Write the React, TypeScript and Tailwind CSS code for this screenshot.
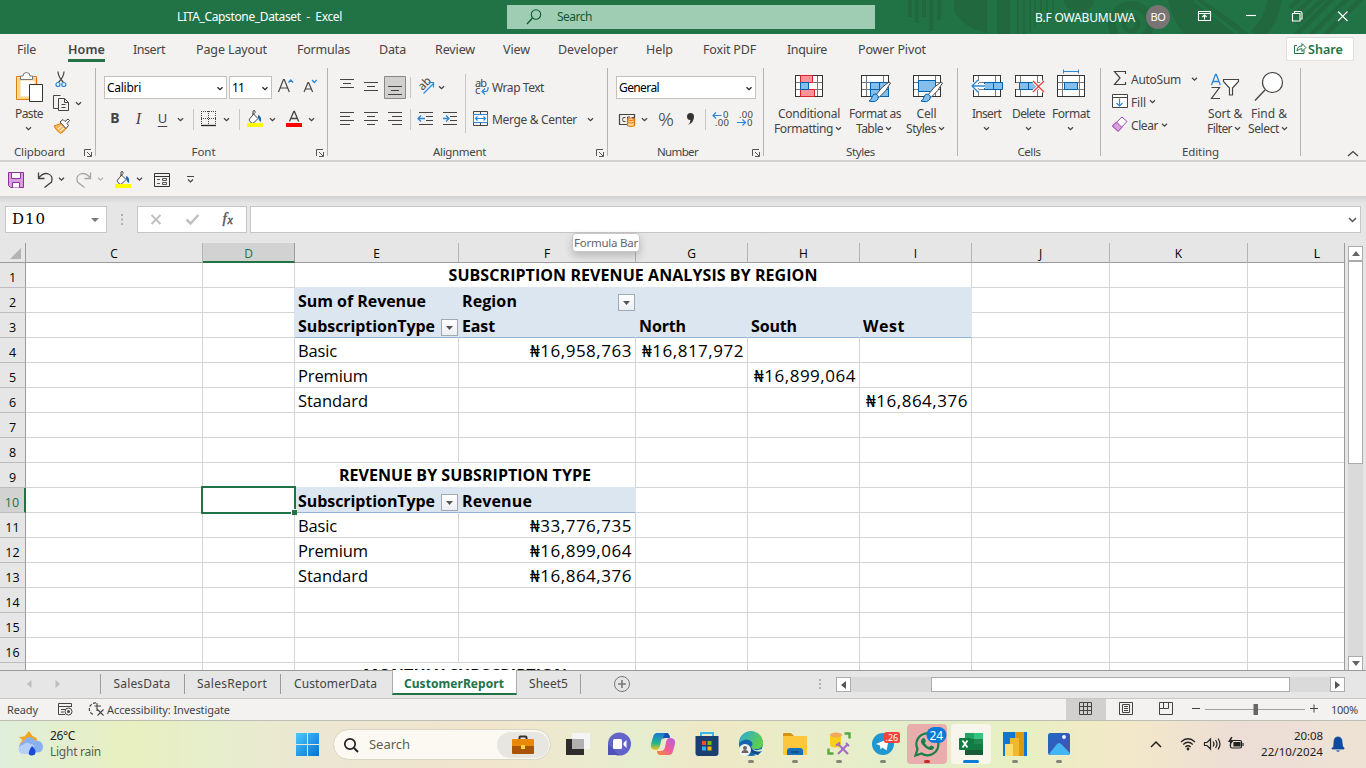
import { useLayoutEffect, useRef } from "react";
import type { ReactNode } from "react";

/* Single line of text whose tracking is fitted to a fixed advance width. */
function T({ w, className = "", children }: { w: number; className?: string; children: string }) {
  const ref = useRef<HTMLSpanElement>(null);
  useLayoutEffect(() => {
    const el = ref.current;
    if (!el) return;
    el.style.width = "auto";
    el.style.letterSpacing = "0px";
    const natural = el.getBoundingClientRect().width;
    el.style.letterSpacing = `${(w - natural) / children.length}px`;
    el.style.width = `${w}px`;
  }, [w, children]);
  return (
    <span ref={ref} className={`inline-block shrink-0 whitespace-nowrap ${className}`}>
      {children}
    </span>
  );
}

/* Drawing whose view box uses window coordinates. */
function V({ b, className = "", children }: { b: [number, number, number, number]; className?: string; children?: ReactNode }) {
  return (
    <svg width={b[2]} height={b[3]} viewBox={b.join(" ")} fill="none" className={`block shrink-0 ${className}`}>
      {children}
    </svg>
  );
}

function Ch({ x, y, c = "#444" }: { x: number; y: number; c?: string }) {
  return <path d={`M${x - 2.5} ${y - 1.2}l2.5 2.4l2.5 -2.4`} stroke={c} strokeWidth="1.3" />;
}

function Lines({ rows }: { rows: [number, number, number][] }) {
  return (
    <g stroke="#444" strokeWidth="1">
      {rows.map(([x1, x2, y]) => (
        <path key={y} d={`M${x1} ${y + 0.5}H${x2}`} />
      ))}
    </g>
  );
}

function VSep({ x, y1, y2 }: { x: number; y1: number; y2: number }) {
  return <path d={`M${x + 0.5} ${y1}V${y2}`} stroke="#c8c6c4" />;
}

/* ---------- Title bar ---------- */

function TitleBar() {
  return (
    <header className="relative flex h-[34px] items-center overflow-hidden bg-[#217346] text-[12px] text-white">
      <svg className="absolute left-0 top-0" width="1366" height="34" viewBox="0 0 1366 34" fill="none">
        <g fill="#22683f">
          <path d="M908 0h4v17h-4zM915 0h4v23h-4zM922 0h4v17h-4zM929 0h4v31h-4zM937 0h4v20h-4zM954 0h33v33q-22-4-33-22zM997 0h13v34h-13zM1017 0h2v34h-2zM1023 0h2v34h-2zM1029 0h2v31h-2zM1034 0h2v27h-2zM1040 0h2v24h-2zM1046 0h2v19h-2zM1052 0h2v14h-2z" />
          <path d="M1064 0a14 11 0 0 0 30 0z" />
          <path d="M1168 0h34l52 34h-70q-12-14-16-34z" />
        </g>
        <g stroke="#22683f">
          <circle cx="1131" cy="24" r="19" strokeWidth="8" />
          <circle cx="1131" cy="24" r="7" strokeWidth="5" />
          <path d="M1194 0l44 34M1208 0l44 34" stroke="#217346" strokeWidth="3" />
          <path d="M1275 -2q-3 22-19 38" strokeWidth="14" />
          <path d="M1290 8l9-9M1294 16l18-18M1297 24l27-26M1296 35l38-38M1308 38l40-40M1322 38l40-40" strokeWidth="5" />
        </g>
      </svg>
      <div className="relative ml-[177px] flex h-full w-[330px] items-center pb-[1px]">
        <T w={165} className="whitespace-pre">{"LITA_Capstone_Dataset  -  Excel"}</T>
      </div>
      <div className="relative mb-px flex h-6 w-[368px] items-center bg-[#9fcdb3] text-[#0e5a2f]">
        <V b={[507, 5, 50, 24]}>
          <circle cx="536" cy="14.5" r="4.7" stroke="#0e5a2f" strokeWidth="1.1" />
          <path d="M532.5 18L527 24" stroke="#0e5a2f" strokeWidth="1.3" />
        </V>
        <T w={35}>Search</T>
      </div>
      <div className="relative ml-[160px] flex h-full items-center">
        <T w={100} className="pt-px">B.F OWABUMUWA</T>
        <div className="ml-[11px] flex size-6 items-center justify-center rounded-full bg-[#7a7574] text-[11px]">
          <T w={15}>BO</T>
        </div>
      </div>
      <V b={[1170, 0, 196, 34]} className="relative">
        <g stroke="#fff" strokeWidth="1.1">
          <path d="M1198.5 11.5h12v9h-12zM1198.5 13.5h12M1204.500 19.500v-4.500M1202.300 17l2.200-2.200l2.200 2.200" />
          <path d="M1246 15.500h10" />
          <path d="M1292.500 13.500h7.500v7.500h-7.500zM1294.500 13.500v-2h5.500q2 0 2 2v5.500h-2" />
          <path d="M1338 11.500l9.500 9.500M1347.500 11.500l-9.500 9.500" />
        </g>
      </V>
    </header>
  );
}

/* ---------- Ribbon tabs ---------- */

const TABS: { name: string; w: number; slot: string; active?: boolean }[] = [
  { name: "File", w: 19, slot: "w-[51px]" },
  { name: "Home", w: 37, slot: "w-[65px]", active: true },
  { name: "Insert", w: 32, slot: "w-[63px]" },
  { name: "Page Layout", w: 71, slot: "w-[101px]" },
  { name: "Formulas", w: 53, slot: "w-[82px]" },
  { name: "Data", w: 27, slot: "w-[56px]" },
  { name: "Review", w: 40, slot: "w-[68px]" },
  { name: "View", w: 27, slot: "w-[55px]" },
  { name: "Developer", w: 60, slot: "w-[88px]" },
  { name: "Help", w: 27, slot: "w-[57px]" },
  { name: "Foxit PDF", w: 53, slot: "w-[84px]" },
  { name: "Inquire", w: 40, slot: "w-[71px]" },
  { name: "Power Pivot", w: 68, slot: "w-[428px]" },
];

function Tabs() {
  return (
    <nav className="flex h-8 items-start pl-[17px] text-[12.500px] leading-[32px] text-[#444]">
      {TABS.map((t) => (
        <div key={t.name} className={`h-8 shrink-0 ${t.slot}`}>
          <div className={`flex h-[28px] w-fit ${t.active ? "border-b-[3px] border-[#217346] font-semibold" : ""}`}>
            <T w={t.w}>{t.name}</T>
          </div>
        </div>
      ))}
      <button className="mt-[3px] flex h-6 w-[68px] shrink-0 items-center rounded-[2px] border border-[#e1dfdd] bg-white text-[12.500px] font-semibold leading-6 text-[#217346]">
        <V b={[1287, 38, 21, 22]}>
          <path d="M1297 45.500h-2.500v8h9.500v-3.500M1297 51q0-5 5-5v-2.500l4 4l-4 4v-2.800q-3 0-5 2.300z" stroke="#217346" />
        </V>
        <T w={35} className="pt-px">Share</T>
      </button>
    </nav>
  );
}

/* ---------- Ribbon ---------- */

function Group({ width, label, labelW, launcher, children }: { width: string; label: string; labelW: number; launcher?: boolean; children: ReactNode }) {
  return (
    <>
      <section className={`flex h-full shrink-0 flex-col ${width}`}>
        <div className="flex h-[79px]">{children}</div>
        <div className="flex h-[15px] items-center leading-[14px]">
          <div className="-mt-[2px] flex grow justify-center text-[11.500px]">
            <T w={labelW}>{label}</T>
          </div>
          {launcher && (
            <V b={[0, 0, 16, 14]}>
              <path d="M5.500 10V3.500H12M8 6l4 4M12.500 6v4.500H8" stroke="#555" />
            </V>
          )}
        </div>
      </section>
      <div className="mt-[2px] h-[88px] w-px shrink-0 bg-[#b5b3b1]" />
    </>
  );
}

function Big({ width, icon, l1, w1, l2, w2 }: { width: string; icon: ReactNode; l1: string; w1: number; l2?: string; w2?: number }) {
  return (
    <div className={`flex shrink-0 flex-col items-center text-[12px] leading-4 ${width}`}>
      {icon}
      <T w={w1} className="relative top-[0.500px]">{l1}</T>
      <div className="flex h-4 items-center">
        {l2 && <T w={w2 ?? 0}>{l2}</T>}
        <svg width="12" height="16" viewBox="0 0 12 16" fill="none" className={l2 ? "-mr-[1px] shrink-0" : "shrink-0"}>
          <Ch x={5.500} y={7.500} />
        </svg>
      </div>
    </div>
  );
}

function Select({ width, children, w }: { width: string; children: string; w: number }) {
  return (
    <div className={`flex h-[23px] shrink-0 items-center justify-between border border-[#c3c1bf] bg-white pl-[2px] text-[12px] leading-[21px] text-black ${width}`}>
      <T w={w}>{children}</T>
      <svg width="12" height="12" viewBox="0 0 12 12" fill="none" className="shrink-0">
        <Ch x={6} y={6.500} c="#222" />
      </svg>
    </div>
  );
}

function TableGlyph({ x, y, w = 27, h = 21 }: { x: number; y: number; w?: number; h?: number }) {
  return (
    <g>
      <rect x={x + 0.5} y={y + 0.5} width={w} height={h} fill="#fff" stroke="#333" />
      <path d={`M${x + 5.500} ${y + 1}v${h - 1}M${x + 22.500} ${y + 1}v${h - 1}M${x + 1} ${y + 7.500}h${w - 1}M${x + 1} ${y + 14.500}h${w - 1}`} stroke="#777" />
    </g>
  );
}

function Brush({ x, y }: { x: number; y: number }) {
  return (
    <g>
      <path d={`M${x + 20} ${y - 1}l1.500 1q-4 8-11.500 14.500l-3-2.500q6-9 13-13z`} fill="#fff" stroke="#444" />
      <path d={`M${x} ${y + 18}q2.500-1 3-4q1-3.500 4-3q3.500 1.500 2 5q-2.500 4-9 2z`} fill="#83beec" stroke="#0063b1" />
    </g>
  );
}

function Bucket({ x, y }: { x: number; y: number }) {
  return (
    <g>
      <path d={`M${x + 6} ${y + 2.500}l5 5l-4.500 4.500q-1 .6-2 0l-2-2.200q-.6-1 0-1.800l5.500-6.500v-1.500q-1-1-2 0v4`} fill="#fff" stroke="#444" />
      <path d={`M${x + 11} ${y + 4}q4 1 3 7q-2-1-3-4z`} fill="#1d70b7" />
      <path d={`M${x} ${y + 14}h16`} stroke="#ffff00" strokeWidth="4" />
    </g>
  );
}

function Clipboard() {
  return (
    <Group width="w-[95px]" label="Clipboard" labelW={51} launcher>
      <div className="pl-[9px]">
        <Big
          width="w-[40px]"
          l1="Paste"
          w1={28}
          icon={
            <V b={[14, 66, 34, 39]}>
              <path d="M21 79h17v19h-17z" fill="#fff" stroke="#f9d48a" strokeWidth="3" />
              <path d="M18.500 76.500h20v23h-20z" stroke="#e07a0a" transform="translate(0 0)" />
              <path d="M22.500 79.500v-3.500h2.500q0-3.500 3.500-3.500t3.500 3.500h2.500v3.500z" fill="#fff" stroke="#777" />
              <path d="M31.500 84.500h13v17h-13z" fill="#fff" stroke="#333" />
            </V>
          }
        />
      </div>
      <V b={[49, 66, 46, 79]}>
        <path d="M58 71.500q0 5 5.500 11M64 71.500q0 5-5.500 11" stroke="#444" strokeWidth="1.200" />
        <circle cx="58" cy="84.500" r="2" stroke="#2b88d8" strokeWidth="1.200" />
        <circle cx="63.800" cy="84.500" r="2" stroke="#2b88d8" strokeWidth="1.200" />
        <path d="M58.500 108.500h-5v-13h7M58.500 98.500h6l4 4v8h-10zM64.500 98.500v4h4M61.500 104.500h4M61.500 107.500h4" stroke="#444" />
        <Ch x={78.500} y={103.500} />
        <path d="M54 126l8.500-3l4 4.500q-2 4-6 6q-4-2.500-6.500-7.500z" fill="#f9b85c" stroke="#e07a0a" />
        <path d="M60 122l3-2.500l2 2l3-2.500l1.500 1.500l-2.500 3l1.500 2l-2.500 3z" fill="#fff" stroke="#444" />
        <path d="M58 129l4-3M60 131l4-3" stroke="#fff" />
      </V>
    </Group>
  );
}

function FontGroup() {
  return (
    <Group width="w-[231px]" label="Font" labelW={24} launcher>
      <div className="flex flex-col pl-2 pt-[10px]">
        <div className="flex h-[23px]">
          <Select width="w-[123px]" w={34}>Calibri</Select>
          <div className="w-[2px]" />
          <Select width="w-[43px]" w={12}>11</Select>
          <V b={[272, 76, 54, 23]}>
            <path d="M278.500 92l5-12.500h.8l5 12.500M280.300 88h7" stroke="#444" strokeWidth="1.200" />
            <path d="M288.500 82.500l2.300-2.500l2.300 2.500" stroke="#2b88d8" strokeWidth="1.300" />
            <path d="M304 92l4-9.500h.6l4 9.500M305.300 89h5.500" stroke="#444" strokeWidth="1.200" />
            <path d="M312 80l2.300 2.500l2.300-2.500" stroke="#2b88d8" strokeWidth="1.300" />
          </V>
        </div>
        <div className="mt-[8px] flex h-[24px] items-center text-[14px] leading-6">
          <span className="-mt-[2px] w-[22px] text-center font-bold">B</span>
          <span className="w-[25px] text-center font-['Liberation_Serif'] text-[16px] italic">I</span>
          <span className="-mt-[2px] w-[23px] text-center text-[13px] underline underline-offset-[3px]">U</span>
          <V b={[174, 107, 150, 24]}>
            <Ch x={180.500} y={119.500} />
            <VSep x={193} y1={109} y2={130} />
            <path d="M201.500 111v13M208.500 111v13M215.500 111v13M201 111.500h15M201 118.500h15" stroke="#444" strokeDasharray="1 1" />
            <path d="M201 125.500h15" stroke="#222" strokeWidth="1.300" />
            <Ch x={226.500} y={119.500} />
            <VSep x={239} y1={109} y2={130} />
            <Bucket x={247} y={111} />
            <Ch x={272.500} y={119.500} />
            <path d="M289.500 121.500l4.300-10h.6l4.300 10M291 118.500h6" stroke="#444" strokeWidth="1.300" />
            <path d="M286 125h16" stroke="#ff0000" strokeWidth="4" />
            <Ch x={311.500} y={119.500} />
          </V>
        </div>
      </div>
    </Group>
  );
}

function Alignment() {
  return (
    <Group width="w-[279px]" label="Alignment" labelW={53} launcher>
      <V b={[328, 66, 147, 79]}>
        <Lines rows={[[340, 354, 79], [343, 351, 83], [340, 354, 87]]} />
        <Lines rows={[[364, 378, 82], [367, 375, 86], [364, 378, 90]]} />
        <path d="M384.500 76.500h21v22h-21z" fill="#d2d0ce" stroke="#8a8886" />
        <Lines rows={[[388, 402, 86], [391, 399, 90], [388, 402, 94]]} />
        <VSep x={410} y1={77} y2={98} />
        <text x="0" y="0" transform="translate(422.500 91) rotate(-45)" fill="#444" fontSize="11.500" fontFamily="Noto Sans">ab</text>
        <path d="M423.500 93.500l10-10M428.500 82.500h5v5" stroke="#2b88d8" strokeWidth="1.200" />
        <Ch x={441.500} y={87.500} />
        <VSep x={465} y1={74} y2={133} />
        <Lines rows={[[340, 354, 112], [340, 350, 116], [340, 354, 120], [340, 350, 124]]} />
        <Lines rows={[[364, 378, 112], [367, 375, 116], [364, 378, 120], [367, 375, 124]]} />
        <Lines rows={[[388, 402, 112], [392, 402, 116], [388, 402, 120], [392, 402, 124]]} />
        <VSep x={410} y1={109} y2={130} />
        <Lines rows={[[419, 433, 112], [426, 433, 116], [426, 433, 120], [419, 433, 124]]} />
        <Lines rows={[[443, 457, 112], [450, 457, 116], [450, 457, 120], [443, 457, 124]]} />
        <path d="M425 118.500h-6.500M421 115.500l-3 3l3 3M443 118.500h5.500M446 115.500l3 3l-3 3" stroke="#2b88d8" strokeWidth="1.300" />
      </V>
      <div className="pt-[10px] text-[12px] leading-[24px]">
        <div className="flex h-[23px]">
          <V b={[475, 76, 17, 23]}>
            <text x="475" y="87" fill="#444" fontSize="11" fontFamily="Noto Sans" textLength="12">ab</text>
            <text x="475" y="94" fill="#444" fontSize="11" fontFamily="Noto Sans">c</text>
            <path d="M488 87v2q0 2.500-3 2.500h-2.500M485 88.500l-3 3l3 3" stroke="#2b88d8" strokeWidth="1.200" />
          </V>
          <T w={52}>Wrap Text</T>
        </div>
        <div className="mt-[9px] flex h-[23px]">
          <V b={[472, 108, 20, 23]} className="-ml-[3px]">
            <path d="M473.500 111.500h14v14h-14zM480.500 112v3M480.500 122v3" stroke="#444" />
            <path d="M473.500 114.500h14v8h-14z" fill="#fff" stroke="#2b88d8" />
            <path d="M475.500 118.500h10M477.500 116.500l-2 2l2 2M483.500 116.500l2 2l-2 2" stroke="#2b88d8" strokeWidth="1.200" />
          </V>
          <T w={85}>Merge & Center</T>
          <V b={[577, 108, 30, 23]}>
            <Ch x={590.500} y={119.500} />
          </V>
        </div>
      </div>
    </Group>
  );
}

function NumberGroup() {
  return (
    <Group width="w-[155px]" label="Number" labelW={41} launcher>
      <div className="pl-2 pt-[10px]">
        <Select width="w-[140px]" w={40}>General</Select>
        <V b={[616, 99, 146, 40]}>
          <path d="M619.500 114.500h15v10h-15z" stroke="#444" strokeWidth="1.200" />
          <path d="M625.500 117.500q-3-1-3 2t3 2M627.500 122v-5h2.500M632 119v-1.500h2.500" stroke="#444" />
          <path d="M627.500 119v6.500q3.500 2 7 0v-6.500q-3.500-2-7 0zM627.500 122q3.500 2 7 0M627.500 119.500q3.500 2 7 0" fill="#fbd9a5" stroke="#e07a0a" strokeWidth="1.200" />
          <Ch x={644.500} y={119.500} />
          <text x="658" y="126" fill="#444" fontSize="18" fontFamily="Noto Sans" fontWeight="300" textLength="16" lengthAdjust="spacingAndGlyphs">%</text>
          <path d="M690.500 113a3.500 3.500 0 0 1 3.500 3.500q0 6-6 8.500q2.500-2.500 2.500-5a3.500 3.500 0 0 1 0-7z" fill="#333" />
          <VSep x={705} y1={109} y2={130} />
          <g fill="#444" fontSize="9.500" fontFamily="Noto Sans">
            <text x="723" y="118">0</text>
            <text x="715" y="126" textLength="14">.00</text>
            <text x="739" y="118" textLength="14">.00</text>
            <text x="747" y="126">0</text>
          </g>
          <path d="M721.500 115.500h-8M716 112.500l-3 3l3 3M737 122.500h8M742.500 119.500l3 3l-3 3" stroke="#2b88d8" strokeWidth="1.200" />
        </V>
      </div>
    </Group>
  );
}

function Styles() {
  return (
    <Group width="w-[193px]" label="Styles" labelW={29}>
      <Big
        width="w-[90px]"
        l1="Conditional"
        w1={62}
        l2="Formatting"
        w2={59}
        icon={
          <V b={[789, 66, 40, 39]}>
            <TableGlyph x={795} y={75} />
            <path d="M800.500 75.500h12v7h-12zM800.500 89.500h14v7h-14z" fill="#ff9296" stroke="#d8232a" />
            <path d="M800.500 82.500h8v7h-8z" fill="#83beec" stroke="#0063b1" />
          </V>
        }
      />
      <Big
        width="w-[42px]"
        l1="Format as"
        w1={52}
        l2="Table"
        w2={27}
        icon={
          <V b={[855, 66, 40, 39]}>
            <TableGlyph x={861} y={75} />
            <path d="M870.500 82.500h18v14h-18z" fill="#83beec" stroke="#0063b1" />
            <path d="M879.500 83v13M871 89.500h17" stroke="#0063b1" />
            <Brush x={869} y={83} />
          </V>
        }
      />
      <Big
        width="w-[61px]"
        l1="Cell"
        w1={20}
        l2="Styles"
        w2={30}
        icon={
          <V b={[907, 66, 40, 39]}>
            <TableGlyph x={913} y={75} />
            <path d="M918.500 80.500h17v11h-17z" fill="#83beec" stroke="#0063b1" />
            <Brush x={921} y={83} />
          </V>
        }
      />
    </Group>
  );
}

function Cells() {
  return (
    <Group width="w-[142px]" label="Cells" labelW={23}>
      <Big
        width="w-[57px]"
        l1="Insert"
        w1={29}
        icon={
          <V b={[967, 66, 40, 39]}>
            <TableGlyph x={973} y={75} />
            <path d="M984.500 82.500h18v7h-18z" fill="#83beec" stroke="#0063b1" />
            <path d="M993.500 83v6" stroke="#0063b1" />
            <path d="M985 86h-12.500M978 80.500l-5.500 5.500l5.500 5.500" stroke="#fff" strokeWidth="4" />
            <path d="M985 86h-13M978 80l-6 6l6 6" stroke="#2b88d8" strokeWidth="1.400" />
          </V>
        }
      />
      <Big
        width="w-[27px]"
        l1="Delete"
        w1={33}
        icon={
          <V b={[1009, 66, 40, 39]}>
            <TableGlyph x={1015} y={75} />
            <path d="M1014 83h5v6h-5zM1033 83h12v6h-12z" fill="#f3f2f1" />
            <path d="M1019.500 82.500h14l3 3.500l-3 3.500h-14z" fill="#83beec" stroke="#0063b1" />
            <path d="M1028.500 83v6" stroke="#0063b1" />
            <path d="M1033.500 81.500l10 10M1043.500 81.500l-10 10" stroke="#fff" strokeWidth="3.500" />
            <path d="M1033 81l11 11M1044 81l-11 11" stroke="#e8423f" strokeWidth="1.400" />
          </V>
        }
      />
      <Big
        width="w-[58px]"
        l1="Format"
        w1={38}
        icon={
          <V b={[1051, 66, 40, 39]}>
            <TableGlyph x={1057} y={75} />
            <path d="M1064.500 82.500h13v7h-13z" fill="#83beec" stroke="#0063b1" />
            <path d="M1063.500 69.500v4M1078.500 69.500v4M1063.500 71.500h15" stroke="#2b88d8" />
          </V>
        }
      />
    </Group>
  );
}

function Editing() {
  return (
    <Group width="w-[199px]" label="Editing" labelW={37}>
      <div className="flex w-[102px] flex-col pt-[2px] text-[12px] leading-[23px]">
        <div className="flex h-[22px]">
          <V b={[1101, 68, 30, 22]}>
            <path d="M1125.500 74v-2.500h-11l5.500 6.500l-5.500 6.500h11v-2.500" stroke="#444" strokeWidth="1.200" />
          </V>
          <T w={50}>AutoSum</T>
          <V b={[1181, 68, 22, 22]}>
            <Ch x={1194.500} y={79} />
          </V>
        </div>
        <div className="flex h-[23px] leading-[25px]">
          <V b={[1101, 90, 30, 23]}>
            <path d="M1112.500 94.500h15v13h-15z" fill="#fff" stroke="#444" />
            <path d="M1112.500 97.500h15" stroke="#444" />
            <path d="M1119.500 98.500v7.500M1116.500 103l3 3l3-3" stroke="#2b88d8" strokeWidth="1.200" />
          </V>
          <T w={15}>Fill</T>
          <V b={[1146, 90, 16, 23]}>
            <Ch x={1152.500} y={101.500} />
          </V>
        </div>
        <div className="flex h-[23px] leading-[25px]">
          <V b={[1101, 113, 30, 23]}>
            <path d="M1112.500 126l9.500-9l5 4.500l-9 9.500z" fill="#fff" stroke="#9b3fa8" />
            <path d="M1112.500 126l4-4l5.500 5.500l-4 4z" fill="#d8a0df" stroke="#9b3fa8" />
          </V>
          <T w={27}>Clear</T>
          <V b={[1158, 113, 16, 23]}>
            <Ch x={1164.500} y={125} />
          </V>
        </div>
      </div>
      <Big
        width="w-[44px]"
        l1="Sort &"
        w1={34}
        l2="Filter"
        w2={25}
        icon={
          <V b={[1205, 66, 40, 39]}>
            <path d="M1211.500 85l4-10.500h.8l4 10.500M1213 81.500h6" stroke="#2b88d8" strokeWidth="1.300" />
            <path d="M1211.500 87.500h8l-8 11h8.500" stroke="#444" strokeWidth="1.200" />
            <path d="M1223.500 79.500h15v2l-6 6.500v7h-3v-7l-6-6.500z" fill="#fff" stroke="#444" strokeWidth="1.200" />
          </V>
        }
      />
      <Big
        width="w-[44px]"
        l1="Find &"
        w1={36}
        l2="Select"
        w2={31}
        icon={
          <V b={[1249, 66, 40, 39]}>
            <circle cx="1272.500" cy="82.500" r="10" fill="#fff" stroke="#444" strokeWidth="1.200" />
            <path d="M1265 90l-10 10.500" stroke="#444" strokeWidth="1.300" />
          </V>
        }
      />
    </Group>
  );
}

function Ribbon() {
  return (
    <div className="flex h-[96px] border-b-2 border-[#d2d0ce] text-[#444]">
      <Clipboard />
      <FontGroup />
      <Alignment />
      <NumberGroup />
      <Styles />
      <Cells />
      <Editing />
      <V b={[1301, 66, 65, 94]}>
        <path d="M1348 156l5-4.500l5 4.500" stroke="#444" strokeWidth="1.300" />
      </V>
    </div>
  );
}

function QuickAccess() {
  return (
    <div className="h-[34px]">
      <V b={[0, 162, 250, 34]}>
        <path d="M8.500 172.500h15v15h-13l-2-2z" fill="#d8a0df" stroke="#8f2f9d" />
        <path d="M11.500 172.500h9v6h-9zM12.500 187.500v-5h7v5" fill="#fff" stroke="#8f2f9d" />
        <path d="M38.500 172.500v6h6M38.500 178q5-6 10-4t3 8l-7 5.500" stroke="#444" strokeWidth="1.300" />
        <Ch x={61.500} y={179} />
        <path d="M90.500 172.500v6h-6M90.500 178q-5-6-10-4t-3 8l7 5.500" stroke="#a8a6a4" strokeWidth="1.300" />
        <Ch x={100.500} y={179} c="#b5b3b1" />
        <Bucket x={115} y={172} />
        <Ch x={139.500} y={179} />
        <path d="M154.500 173.500h15v13h-15zM154.500 176.500h15" stroke="#333" />
        <path d="M157 179.500h3M157 183.500h3M162.500 178.500h4v2h-4zM162.500 182.500h4v2h-4z" stroke="#555" />
        <path d="M187 176.500h7" stroke="#444" />
        <path d="M188 179.500l2.500 2.500l2.500-2.500" stroke="#444" strokeWidth="1.200" />
      </V>
    </div>
  );
}

function FormulaBar() {
  return (
    <div className="flex h-[47px] bg-gradient-to-b from-[#d0d0d0] via-[#e6e6e6] via-15% to-[#e6e6e6] pl-[5px] pt-[10px]">
      <div className="flex h-[27px] w-[102px] items-center justify-between border border-[#c6c6c6] bg-white pl-[6px] font-['DejaVu_Serif','Liberation_Serif'] text-[15px] text-black">
        <T w={34}>D10</T>
        <svg width="20" height="10" viewBox="0 0 20 10">
          <path d="M5 3h8l-4 4z" fill="#777" />
        </svg>
      </div>
      <V b={[107, 206, 30, 27]}>
        <path d="M121 214h2v2h-2zM121 218.500h2v2h-2zM121 223h2v2h-2z" fill="#b0b0b0" />
      </V>
      <div className="h-[27px] w-[110px] border border-[#c6c6c6] bg-white">
        <V b={[138, 207, 108, 25]}>
          <path d="M151.500 215l9 9M160.500 215l-9 9" stroke="#c0c0c0" strokeWidth="2" />
          <path d="M186.500 219.500l4 4l8-8.500" stroke="#c0c0c0" strokeWidth="2.500" />
          <text x="222.500" y="223" fill="#555" fontSize="15" fontStyle="italic" fontFamily="Liberation Serif" stroke="#555" strokeWidth=".4">f</text>
          <text x="227.500" y="224" fill="#555" fontSize="12" fontStyle="italic" fontFamily="Liberation Serif" stroke="#555" strokeWidth=".4">x</text>
        </V>
      </div>
      <div className="ml-[3px] flex h-[27px] w-[1111px] items-center justify-end border border-[#c6c6c6] bg-white">
        <svg width="16" height="12" viewBox="0 0 16 12" fill="none">
          <path d="M5 4l3.500 3.500L12 4" stroke="#555" strokeWidth="1.500" />
        </svg>
      </div>
    </div>
  );
}

/* ---------- Sheet ---------- */

const COLS = [
  { n: "C", w: "w-[177px]" },
  { n: "D", w: "w-[92px]" },
  { n: "E", w: "w-[164px]" },
  { n: "F", w: "w-[177px]" },
  { n: "G", w: "w-[112px]" },
  { n: "H", w: "w-[112px]" },
  { n: "I", w: "w-[112px]" },
  { n: "J", w: "w-[138px]" },
  { n: "K", w: "w-[138px]" },
];

type Cell = { t?: string; tw?: number; num?: boolean; drop?: boolean; head?: boolean; under?: boolean; blueR?: boolean; blueB?: boolean; title?: boolean; w?: string; skip?: boolean; sel?: boolean };

const skip: Cell = { skip: true };
const hd = (t?: string, tw?: number, o: Cell = {}): Cell => ({ t, tw, head: true, ...o });
const tx = (t: string, tw: number): Cell => ({ t, tw });
const nm = (t: string): Cell => ({ t, tw: 102, num: true });

const ROWS: Record<number, Record<string, Cell>> = {
  1: { E: { t: "SUBSCRIPTION REVENUE ANALYSIS BY REGION", tw: 369, title: true, w: "w-[677px]", blueB: true }, F: skip, G: skip, H: skip, I: skip },
  2: { D: { blueR: true }, E: hd("Sum of Revenue", 128), F: hd("Region", 55, { drop: true }), G: hd(), H: hd(), I: hd() },
  3: { D: { blueR: true }, E: hd("SubscriptionType", 137, { drop: true, under: true }), F: hd("East", 33, { under: true }), G: hd("North", 47, { under: true }), H: hd("South", 46, { under: true }), I: hd("West", 42, { under: true }) },
  4: { E: tx("Basic", 39), F: nm("₦16,958,763"), G: nm("₦16,817,972") },
  5: { E: tx("Premium", 70), H: nm("₦16,899,064") },
  6: { E: tx("Standard", 70), I: nm("₦16,864,376") },
  9: { E: { t: "REVENUE BY SUBSRIPTION TYPE", tw: 252, title: true, w: "w-[341px]", blueB: true }, F: skip },
  10: { D: { sel: true }, E: hd("SubscriptionType", 137, { drop: true, under: true }), F: hd("Revenue", 70, { under: true }) },
  11: { E: tx("Basic", 39), F: nm("₦33,776,735") },
  12: { E: tx("Premium", 70), F: nm("₦16,899,064") },
  13: { E: tx("Standard", 70), F: nm("₦16,864,376") },
  17: { E: { t: "MONTHLY SUBSCRIPTION", tw: 204, title: true, w: "w-[341px]" }, F: skip },
};

function DropButton() {
  return (
    <span className="mt-[6px] flex size-[17px] shrink-0 items-center justify-center self-start border border-[#a0a8b2] bg-gradient-to-b from-white to-[#eceff3]">
      <svg width="7" height="4" viewBox="0 0 7 4">
        <path d="M0 0h7L3.500 4z" fill="#555" />
      </svg>
    </span>
  );
}

function GridCell({ cell, width }: { cell: Cell; width: string }) {
  const right = cell.head || cell.blueR ? "border-r-[#dce6f1]" : "border-r-[#d4d4d4]";
  const bottom = cell.under ? "border-b-[#95b3d7]" : cell.head || cell.blueB ? "border-b-[#dce6f1]" : "border-b-[#d4d4d4]";
  const kind = cell.title
    ? "justify-center font-bold text-[16px] leading-[24px]"
    : cell.num
      ? "justify-end pr-[3px] text-[17px] leading-[26px]"
      : cell.head
        ? "bg-[#dce6f1] pl-[3px] font-bold text-[16px] leading-[26px]"
        : "pl-[3px] text-[16.500px] leading-[26px]";
  return (
    <div className={`relative flex h-[25px] shrink-0 border-b border-r ${right} ${bottom} ${kind} ${cell.w ?? width}`}>
      {cell.t && <T w={cell.tw ?? 0}>{cell.t}</T>}
      {cell.drop && (
        <>
          <span className="grow" />
          <span className="flex">
            <DropButton />
          </span>
        </>
      )}
      {cell.sel && (
        <>
          <span className="absolute -left-[2px] -top-[2px] z-10 h-[28px] w-[95px] border-2 border-[#217346]" />
          <span className="absolute left-[88px] top-[21px] z-10 size-[6px] border-l border-t border-white bg-[#217346]" />
        </>
      )}
    </div>
  );
}

function Sheet() {
  return (
    <div className="flex h-[427px] bg-[#e6e6e6]">
      <div className="flex h-[427px] w-[1345px] shrink-0 flex-col overflow-hidden border-r border-[#9b9b9b]">
        <div className="flex h-[20px] shrink-0 text-[12px] leading-[21px] text-black">
          <div className="flex w-[26px] shrink-0 items-end justify-end border-b border-r border-[#9b9b9b]">
            <svg width="16" height="17" viewBox="0 0 16 17">
              <path d="M12 3v11H1z" fill="#b4b4b4" />
            </svg>
          </div>
          {COLS.map((c) => (
            <div
              key={c.n}
              className={`shrink-0 border-r text-center font-['Open_Sans','Noto_Sans',sans-serif] ${c.w} ${c.n === "D" ? "border-b-2 border-b-[#217346] border-r-[#9b9b9b] bg-[#d2d2d2] text-[#217346]" : "border-b border-b-[#9b9b9b] border-r-[#b4b4b4]"}`}
            >
              {c.n}
            </div>
          ))}
          <div className="w-[138px] shrink-0 border-b border-[#9b9b9b] text-center">L</div>
        </div>
        {Array.from({ length: 17 }, (_, i) => i + 1).map((r) => (
          <div key={r} className="flex h-[25px] shrink-0 bg-white font-['Open_Sans','Noto_Sans',sans-serif] text-black">
            <div
              className={`h-[25px] w-[26px] shrink-0 border-b border-b-[#bdbdbd] text-center text-[12.500px] leading-[29px] ${r === 10 ? "border-r-2 border-r-[#217346] bg-[#d2d2d2] text-[#217346]" : "border-r border-r-[#9b9b9b] bg-[#e6e6e6]"}`}
            >
              {r < 17 ? r : ""}
            </div>
            {COLS.map((c) => {
              const cell = ROWS[r]?.[c.n] ?? {};
              return cell.skip ? null : <GridCell key={c.n} cell={cell} width={c.w} />;
            })}
            <div className="h-[25px] w-[138px] shrink-0 border-b border-[#d4d4d4]" />
          </div>
        ))}
      </div>
      <div className="ml-[3px] mt-[3px] flex h-[424px] w-[15px] flex-col bg-[#dadada]">
        <div className="flex h-[15px] items-center justify-center border border-[#ababab] bg-white">
          <svg width="8" height="5" viewBox="0 0 8 5"><path d="M0 5h8L4 0z" fill="#666" /></svg>
        </div>
        <div className="h-[203px] border border-[#ababab] bg-white" />
        <div className="grow" />
        <div className="mb-[-1px] flex h-[15px] items-center justify-center border border-[#ababab] bg-white">
          <svg width="8" height="5" viewBox="0 0 8 5"><path d="M0 0h8L4 5z" fill="#666" /></svg>
        </div>
      </div>
    </div>
  );
}

const SHEETS = [
  { n: "SalesData", w: 57, slot: "w-[84px]" },
  { n: "SalesReport", w: 70, slot: "w-[96px]" },
  { n: "CustomerData", w: 83, slot: "w-[111px]" },
];

function SheetTabs() {
  return (
    <div className="flex h-[29px] border-b border-[#c6c6c6] border-t border-t-[#9b9b9b] bg-[#e6e6e6] text-[12px] leading-[25px] text-[#444]">
      <V b={[0, 671, 100, 27]}>
        <path d="M31.500 680v8l-4.500-4zM55.500 680v8l4.500-4z" fill="#bdbdbd" />
      </V>
      {SHEETS.map((s) => (
        <div key={s.n} className="flex">
          <div className="mt-[3px] h-5 border-l border-[#9b9b9b]" />
          <div className={`-ml-px flex justify-center ${s.slot}`}>
            <T w={s.w}>{s.n}</T>
          </div>
        </div>
      ))}
      <div className="-mt-px ml-px flex h-[25px] w-[125px] justify-center border-b-[2px] border-l border-r border-b-[#217346] border-l-[#ababab] border-r-[#ababab] bg-white pr-px font-bold leading-[27px] text-[#217346]">
        <T w={100}>CustomerReport</T>
      </div>
      <div className="flex w-[63px] justify-center">
        <T w={39}>Sheet5</T>
      </div>
      <V b={[580, 671, 256, 27]}>
        <path d="M580.500 674v20" stroke="#9b9b9b" />
        <circle cx="622" cy="684" r="7.500" stroke="#777" />
        <path d="M618 684h8M622 680v8" stroke="#777" strokeWidth="1.600" />
        <path d="M819 679h2v2h-2zM819 683h2v2h-2zM819 687h2v2h-2z" fill="#b0b0b0" />
      </V>
      <div className="mt-[6px] flex h-[15px] w-[509px] bg-[#dadada]">
        <div className="flex w-[15px] items-center justify-center border border-[#ababab] bg-white">
          <svg width="5" height="8" viewBox="0 0 5 8"><path d="M5 0v8L0 4z" fill="#555" /></svg>
        </div>
        <div className="w-[80px]" />
        <div className="w-[359px] border border-[#ababab] bg-white" />
        <div className="grow" />
        <div className="flex w-[15px] items-center justify-center border border-[#ababab] bg-white">
          <svg width="5" height="8" viewBox="0 0 5 8"><path d="M0 0v8l5-4z" fill="#555" /></svg>
        </div>
      </div>
    </div>
  );
}

function StatusBar() {
  return (
    <div className="flex h-[22px] items-center border-b border-[#bdbfb4] bg-[#f3f2f1] pl-[7px] text-[11px] leading-[21px] text-[#444]">
      <T w={31}>Ready</T>
      <V b={[38, 699, 69, 21]}>
        <path d="M71.500 707v-3.500h-13v11h6.500M58.500 706.500h13M61 709.500h4M61 712h3" stroke="#444" />
        <circle cx="68.500" cy="711.500" r="3.500" stroke="#444" />
        <circle cx="68.500" cy="711.500" r="1.500" fill="#444" />
        <path d="M96 703a6 6 0 0 0-3 11.500" stroke="#444" strokeWidth="1.200" strokeDasharray="3 1.500" />
        <path d="M94.500 706h6.500M97 703v8M97.500 709.500l6 6M103.500 709.500l-6 6" stroke="#444" strokeWidth="1.100" />
      </V>
      <T w={123}>Accessibility: Investigate</T>
      <V b={[230, 699, 1101, 21]}>
        <path d="M1066 699h40v21h-40z" fill="#d2d0ce" />
        <path d="M1079.500 702.500h12v12h-12zM1083.500 702.500v12M1087.500 702.500v12M1079.500 706.500h12M1079.500 710.500h12" stroke="#444" />
        <path d="M1119.500 702.500h13v12h-13zM1122.500 704.500h7v8h-7zM1124 706.500h4M1124 708.500h4M1124 710.500h4" stroke="#444" />
        <path d="M1159.500 702.500h13v12h-13zM1163.500 702.500v6h5v-6M1159.500 708.500h4" stroke="#444" />
        <path d="M1192 708.500h8M1310 708.500h8M1314 704.500v8" stroke="#444" />
        <path d="M1205 709.500h100" stroke="#a0a0a0" />
        <path d="M1253.500 704h4.500v11h-4.500z" fill="#666" />
      </V>
      <T w={27}>100%</T>
    </div>
  );
}

/* ---------- Taskbar ---------- */

function Slot({ dot = "", tile = "", children }: { dot?: string; tile?: string; children: ReactNode }) {
  return (
    <div className="flex h-[47px] w-11 shrink-0 justify-center pt-[3px]">
      <div className={`flex h-10 w-10 flex-col items-center rounded-[4px] ${tile}`}>
        <svg width="40" height="36" viewBox="0 0 40 36" fill="none" className="block shrink-0 overflow-visible">
          {children}
        </svg>
        <div className={`rounded-full ${dot}`} />
      </div>
    </div>
  );
}

const GREY = "h-[3px] w-[6px] bg-[#858577]";

function Taskbar() {
  return (
    <footer className="flex h-[47px] bg-[linear-gradient(90deg,#dfeedb_0px,#e8efc0_130px,#e6edcd_220px,#ece6d2_330px,#f1e5cd_490px,#e6edcf_640px,#eee8c6_710px,#e8edc8_820px,#e2eecb_930px,#e8efc2_1020px,#f3e9c8_1120px,#ecddd6_1240px,#eee2d4_1366px)]">
      <V b={[0, 721, 50, 47]}>
        <path d="M29 731l3.500 5q4 1 5 4l-9 5l-9-1l3-4l-3.500-3l5.500-.5z" fill="#f3a71c" />
        <path d="M24 742a5.500 5.500 0 0 1 10.500-1.500q8-.5 8.500 6q0 6-6 6h-13q-5 0-5-5t5-5.500z" fill="#8ab0f0" />
        <path d="M23 754a4.500 4.500 0 0 1 0-9q3-4 7.500-1q4 0 4 5t-4 5z" fill="#b6cff9" />
        <path d="M32 746q5 4 3 8.500q-4 2-6 0q-1-3 3-8.500z" fill="#1a4bd8" />
      </V>
      <div className="flex w-[244px] shrink-0 flex-col items-start pt-[7px] text-[12px] leading-4 text-[#222]">
        <T w={25}>26°C</T>
        <T w={51} className="text-[#5c5f52]">Light rain</T>
      </div>
      <V b={[294, 721, 39, 47]}>
        <defs>
          <linearGradient id="win" x1="0" y1="0" x2="1" y2="1">
            <stop offset="0" stopColor="#4cc8fb" />
            <stop offset="1" stopColor="#0072d6" />
          </linearGradient>
        </defs>
        <path d="M296 733h11v11h-11zM308 733h11v11h-11zM296 745h11v11h-11zM308 745h11v11h-11z" fill="url(#win)" />
      </V>
      <div className="mt-2 flex h-[31px] w-[218px] shrink-0 items-center rounded-full border border-[#d8d6c4] bg-[#fbf9f2] text-[13px] text-[#5c5f5a]">
        <V b={[334, 729, 35, 29]}>
          <circle cx="350" cy="743" r="5.200" stroke="#222" strokeWidth="1.700" />
          <path d="M354 747l4 4" stroke="#222" strokeWidth="1.900" />
        </V>
        <T w={41}>Search</T>
        <div className="ml-auto mr-[1px] flex h-[26px] w-[52px] items-center justify-center rounded-full bg-[#e8e6e0]">
          <svg width="24" height="20" viewBox="0 0 24 20" fill="none">
            <path d="M8.500 4V2.500q0-1 1-1h5q1 0 1 1V4" stroke="#333" strokeWidth="2" />
            <rect x="1" y="4" width="22" height="8" rx="1" fill="#e8890c" />
            <path d="M1 11h22v7q0 1-1 1H2q-1 0-1-1z" fill="#a95407" />
            <path d="M10 10h4v4h-4z" fill="#ffd83b" />
          </svg>
        </div>
      </div>
      <div className="w-[2px] shrink-0" />
      <Slot>
        <path d="M11 15h18v16H11z" fill="#2c2c2c" />
        <path d="M17 9h18v16H17z" fill="#f4f4f4" />
        <path d="M17 15h12v10H17z" fill="#b0b0b0" />
      </Slot>
      <Slot>
        <circle cx="20.500" cy="20" r="11.500" fill="#6264c7" />
        <path d="M9 20v11h11z" fill="#4f52b8" />
        <rect x="14" y="15" width="9" height="10" rx="1.500" fill="#fff" />
        <path d="M24.500 19l3-3v8l-3-3z" fill="#fff" />
      </Slot>
      <Slot>
        <defs>
          <linearGradient id="cpa" x1="0" y1="0" x2="0" y2="1"><stop offset="0" stopColor="#1479d8" /><stop offset=".6" stopColor="#27b58a" /><stop offset="1" stopColor="#f5c51e" /></linearGradient>
          <linearGradient id="cpb" x1="1" y1="0" x2="0" y2="1"><stop offset="0" stopColor="#b45be8" /><stop offset=".5" stopColor="#ee5d9c" /><stop offset="1" stopColor="#f98b2b" /></linearGradient>
        </defs>
        <path d="M14 9h9q3 0 4 4l-5 0q-3 0-4 4l-1 5q-1 4-4 4q-6 0-5-6l2-7q1-4 4-4z" fill="url(#cpa)" />
        <path d="M26 31h-9q-3 0-3-4l4 0q3 0 4-4l1-5q1-4 4-4q6 0 5 6l-2 7q-1 4-4 4z" fill="url(#cpb)" />
        <path d="M22 9h2q2 0 3 5l-5 0q-2 0-3 2z" fill="#1b4db5" />
      </Slot>
      <Slot>
        <path d="M14 13v-4h12v4" stroke="#35b8f0" strokeWidth="2" />
        <path d="M8.500 12h23v17q0 3-3 3h-17q-3 0-3-3z" fill="#1c3f72" />
        <path d="M15 17h4v4h-4z" fill="#f25022" /><path d="M20.500 17h4v4h-4z" fill="#7fba00" />
        <path d="M15 22.500h4v4h-4z" fill="#35b1f0" /><path d="M20.500 22.500h4v4h-4z" fill="#ffb900" />
      </Slot>
      <Slot dot={GREY}>
        <defs>
          <linearGradient id="edg" x1="0" y1="0" x2="1" y2=".5"><stop offset="0" stopColor="#2aa8e0" /><stop offset="1" stopColor="#5ed04b" /></linearGradient>
        </defs>
        <circle cx="20" cy="20" r="12" fill="#1565b0" />
        <path d="M8 19a12 12 0 0 1 24 0q0 6-7 6q-4 0-5-2q3-3 0-6q-5-4-12 2z" fill="url(#edg)" />
        <path d="M20 23q3 5 11 2l1-4l3 8l-9 3q-6-3-6-9z" fill="#e8edd0" />
        <path d="M18 22q0 8 9 9l4-4q-8 2-11-4z" fill="#0d4a8c" />
        <circle cx="14" cy="26" r="6" fill="#f2f2f2" />
        <circle cx="14" cy="24" r="2" fill="#666" /><path d="M10.500 29q0-3 3.500-3t3.500 3z" fill="#666" />
      </Slot>
      <Slot dot={GREY}>
        <path d="M8 10q0-1 1-1h7l3 3h-11z" fill="#d8930e" />
        <path d="M8 12h23q1 0 1 1v17q0 1-1 1h-22q-1 0-1-1z" fill="#fcc73b" />
        <path d="M12 31v-4q0-3 3-3h10q3 0 3 3v4z" fill="#1570b8" />
        <path d="M16 28h8" stroke="#0d4a82" strokeWidth="1.500" />
      </Slot>
      <Slot dot={GREY}>
        <path d="M11 11v11q5.500 3 11 0v-11z" fill="#f8d01c" />
        <ellipse cx="17" cy="11" rx="6" ry="2.500" fill="#f2a85a" />
        <path d="M25.500 9.500h5v5M14.500 29.500h-5v-5" stroke="#57a63f" strokeWidth="2.400" />
        <path d="M19 20l10 10M29 20l-10 10M17 21.500l4-3M27 19l3 3" stroke="#a469cf" strokeWidth="2" />
      </Slot>
      <Slot dot={GREY}>
        <circle cx="20" cy="20" r="11" fill="#2197d0" />
        <path d="M13 20l13-5.500l-2.500 12l-4-3l-2 2l-.5-4z" fill="#fff" />
        <rect x="21" y="8" width="16" height="11" rx="2.500" fill="#f4433c" />
        <text x="22.500" y="17" fill="#fff" fontSize="9" fontFamily="Noto Sans">.26</text>
      </Slot>
      <Slot tile="bg-[#e9aeac]" dot="h-[3px] w-[6px] bg-[#c42b1c]">
        <path d="M8.500 31.500l2-6.500a11 11 0 1 1 4 4.500z" stroke="#1b7f4b" strokeWidth="2.200" />
        <path d="M15.500 14.500q2-1 2.500.5l.8 2q0 1-1 2q1.500 3 4.500 4q1.500-2 2.500-1.200l2 1q.8.700-.3 2q-2.500 3-8-1q-5.500-4.500-4.500-7.500z" fill="#1b7f4b" />
        <rect x="19.500" y="3" width="20" height="16" rx="8" fill="#0a7ad6" />
        <text x="22.500" y="15.500" fill="#fff" fontSize="12" fontFamily="Noto Sans">24</text>
      </Slot>
      <Slot tile="bg-[#f7f5ec]" dot="h-[3px] w-4 bg-[#0a7ad6]">
        <path d="M14 9h18v22h-18z" fill="#1f8a50" />
        <path d="M14 9h9v6h-9z" fill="#21a366" /><path d="M23 9h9v6h-9z" fill="#33c481" />
        <path d="M14 15h9v11h-9z" fill="#107c41" /><path d="M23 20h9v6h-9z" fill="#107c41" /><path d="M14 26h18v5h-18z" fill="#185c37" />
        <rect x="8" y="14" width="12" height="12" rx="1" fill="#107c41" />
        <path d="M11.500 16.500l5 7M16.500 16.500l-5 7" stroke="#fff" strokeWidth="1.800" />
      </Slot>
      <Slot dot={GREY}>
        <path d="M8 8h24v24h-24z" fill="#0b78d4" />
        <path d="M20 8h9v24h-9z" fill="#d99a12" /><path d="M15 14h9v18h-9z" fill="#efb92c" /><path d="M10 20h8v12h-8z" fill="#fbdc6e" />
      </Slot>
      <Slot dot={GREY}>
        <defs>
          <linearGradient id="pho" x1="0" y1="0" x2="1" y2="1"><stop offset="0" stopColor="#2068c4" /><stop offset="1" stopColor="#4a4fb0" /></linearGradient>
        </defs>
        <rect x="9" y="9" width="22" height="22" rx="2.500" fill="url(#pho)" />
        <path d="M10 30l8-10q2-2 4 0l9 9q0 2-2 2h-17z" fill="#41b6f2" />
        <circle cx="25" cy="13" r="1.900" fill="#fff" />
      </Slot>
      <V b={[1081, 721, 177, 47]}>
        <path d="M1151 747l5-5l5 5" stroke="#222" strokeWidth="1.500" />
        <g stroke="#222" strokeWidth="1.200">
          <path d="M1181 742q7-6.500 14 0M1183.200 744.500q4.800-4.500 9.600 0M1185.300 747q2.700-2.500 5.400 0" />
          <circle cx="1188" cy="749" r=".8" fill="#222" />
          <path d="M1204.500 742.500h2.500l3.500-3.500v10l-3.500-3.500h-2.500zM1213 741.500q2 2.500 0 5M1215.500 740q3 4 0 8M1218 738.500q4 5.500 0 11" />
          <rect x="1230.500" y="740.500" width="11" height="7.500" rx="1.500" />
          <path d="M1234 742.500h6v3.500h-6z" fill="#222" /><path d="M1243 743v3" />
        </g>
        <path d="M1231 737l-3 5h2.500l-1 4l4-5.500h-2.500l1.500-3.500z" fill="#222" />
      </V>
      <div className="flex w-[65px] shrink-0 flex-col items-end pt-[7px] text-[11.500px] leading-4 text-[#222]">
        <T w={29}>20:08</T>
        <T w={62}>22/10/2024</T>
      </div>
      <V b={[1323, 721, 43, 47]}>
        <path d="M1333 748q1-1 1-6q0-5 4-5t4 5q0 5 2 6v1h-12v-1z" fill="#0b4a9e" stroke="#0b4a9e" strokeWidth=".8" />
        <path d="M1336 750.500h4q-2 2.500-4 0z" fill="#0b4a9e" />
      </V>
    </footer>
  );
}

export default function App() {
  return (
    <div className="relative flex h-[768px] w-[1366px] flex-col overflow-hidden bg-[#f3f2f1] font-['Noto_Sans',sans-serif]">
      <TitleBar />
      <Tabs />
      <Ribbon />
      <QuickAccess />
      <FormulaBar />
      <Sheet />
      <SheetTabs />
      <StatusBar />
      <Taskbar />
      <div className="absolute left-[572px] top-[233px] flex h-[19px] w-[68px] justify-center rounded-[4px] border border-[#c8c8c8] bg-white text-[11.500px] leading-[17px] text-[#666] shadow-[0_4px_8px_rgba(0,0,0,0.2)]">
        <T w={64}>Formula Bar</T>
      </div>
    </div>
  );
}
